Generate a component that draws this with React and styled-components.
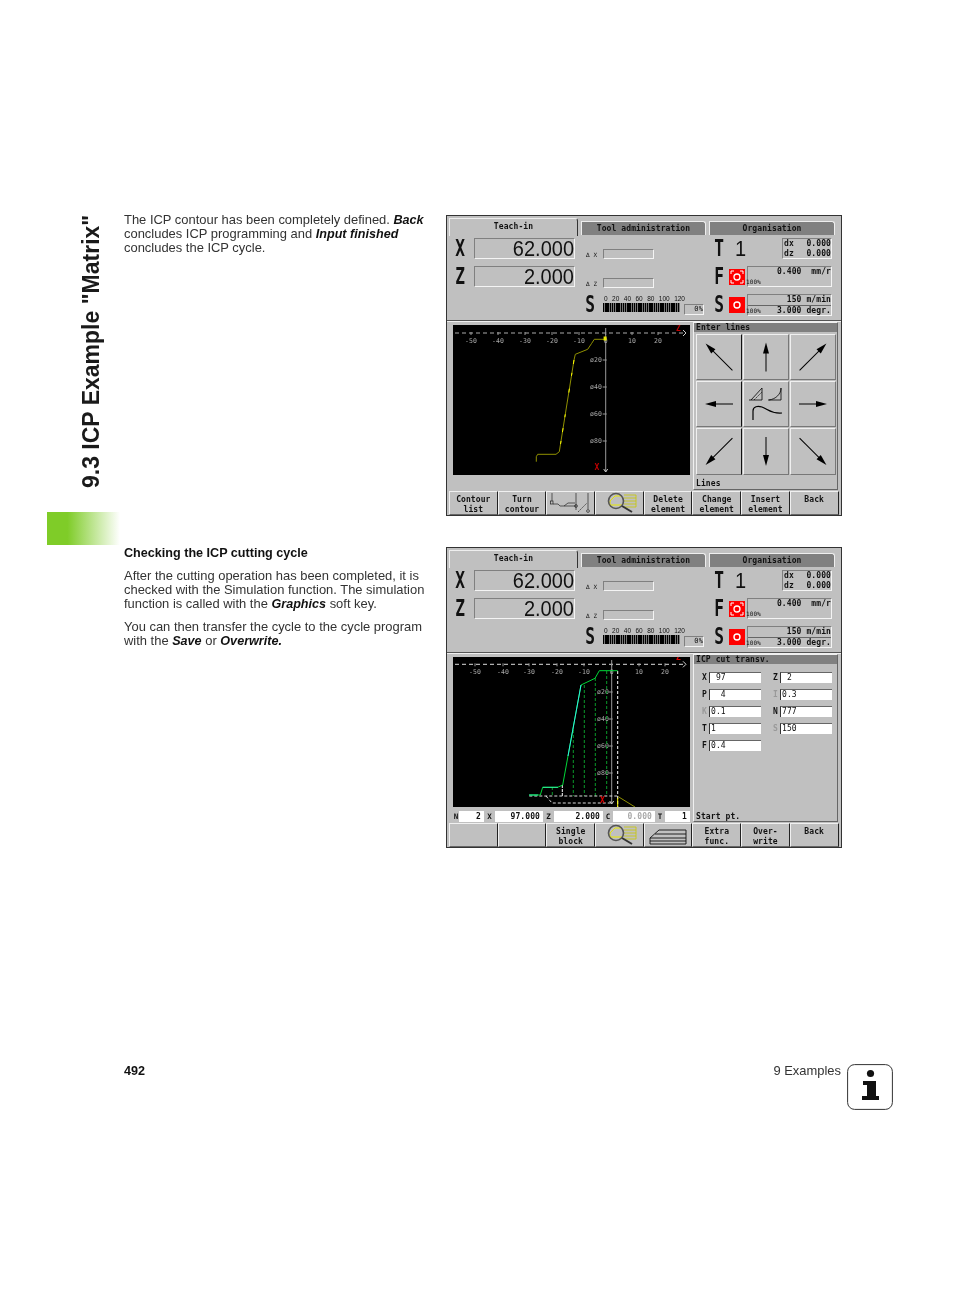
import styled, { createGlobalStyle } from "styled-components";

const GlobalStyle = createGlobalStyle`
  html, body {
    margin: 0;
    padding: 0;
    background: #fff;
  }
`;

const Page = styled.div`
  width: 954px;
  height: 1308px;
  box-sizing: border-box;
  padding: 215px 61px 0 47px;
  font-family: "Liberation Sans", Arial, sans-serif;
  color: #333;
  overflow: hidden;
  will-change: transform;
`;

const Section = styled.section`
  display: grid;
  grid-template-columns: 77px 322px 396px;
  height: 301px;
  margin-bottom: 31px;
`;

const Side = styled.div`
  display: flex;
  flex-direction: column;
`;

const ChapterTitle = styled.h1`
  margin: 0 0 0 32px;
  width: 24px;
  height: 273px;
  writing-mode: vertical-rl;
  transform: rotate(180deg);
  font-size: 23px;
  line-height: 24px;
  font-weight: 700;
  white-space: nowrap;
  color: #1a1a1a;
`;

const GreenTab = styled.div`
  margin-top: 24px;
  width: 73px;
  height: 33px;
  background: linear-gradient(90deg, #7fcc28 0, #7fcc28 28%, #ffffff 100%);
`;

const Copy = styled.div`
  margin-top: ${(p) => p.$top}px;
  font-size: 12.95px;
  line-height: 14px;
  > p {
    margin: 0 0 9px;
    width: 304px;
  }
  b {
    font-size: 12.6px;
    color: #111;
  }
  > h2 {
    margin: 0 0 9px;
    font-size: 12.6px;
    line-height: 14px;
    color: #111;
  }
`;

const Footer = styled.footer`
  margin-top: 216px;
  margin-left: 77px;
  display: flex;
  align-items: flex-start;
  font-size: 12.95px;
  line-height: 14px;
`;

const PageNumber = styled.b`
  color: #111;
  font-size: 12.6px;
  flex: 1;
`;

const ChapterName = styled.span`
  margin-right: 6px;
`;

const InfoBox = styled.svg`
  width: 46px;
  height: 46px;
  display: block;
`;

/* machine screen */

const Screen = styled.div`
  width: 396px;
  height: 301px;
  box-sizing: border-box;
  border: 1px solid #333;
  background: #c0c0c0;
  color: #111;
  font-family: "DejaVu Sans Mono", "Liberation Mono", monospace;
  font-size: 8px;
  letter-spacing: 0.1px;
  display: flex;
  flex-direction: column;
`;

const Top = styled.div`
  height: 105px;
  flex: none;
  box-sizing: border-box;
  border-bottom: 1px solid #555;
  box-shadow: 0 1px 0 #f0f0f0;
`;

const Tabs = styled.div`
  display: flex;
  gap: 3px;
  padding: 2px 0 0 2px;
  height: 18px;
  align-items: flex-end;
`;

const Tab = styled.div`
  width: ${(p) => p.$w}px;
  height: ${(p) => (p.$active ? 18 : 14)}px;
  box-sizing: border-box;
  margin-bottom: ${(p) => (p.$active ? 0 : 1)}px;
  background: ${(p) => (p.$active ? "#c0c0c0" : "#808080")};
  border-top: 1px solid #eee;
  border-left: 1px solid #eee;
  border-right: 1px solid ${(p) => (p.$active ? "#333" : "#eee")};
  border-radius: 0 3px 0 0;
  display: flex;
  justify-content: center;
  padding-top: ${(p) => (p.$active ? 3 : 2)}px;
  font-weight: 700;
`;

const Readouts = styled.div`
  margin: 2px 0 0 8px;
  display: grid;
  grid-template-columns: 120px 119px 118px;
  column-gap: 10px;
  grid-template-rows: 28px 28px 26px;
`;

const Cell = styled.div`
  display: flex;
  align-items: flex-start;
  min-width: 0;
`;

const AxisLetter = styled.span`
  width: ${(p) => p.$w || 19}px;
  flex: none;
  font-family: "DejaVu Sans Mono", monospace;
  font-weight: 700;
  font-size: 17px;
  line-height: 21px;
  letter-spacing: 0;
  transform: scale(0.95, 1.35);
  transform-origin: 4px 50%;
`;

const Value = styled.div`
  width: 101px;
  height: 21px;
  box-sizing: border-box;
  border: 1px solid;
  border-color: #808080 #f4f4f4 #f4f4f4 #808080;
  font-family: "Liberation Sans", Arial, sans-serif;
  font-size: 20px;
  line-height: 19px;
  letter-spacing: 0;
  text-align: right;
  color: #111;
  > span {
    display: inline-block;
    transform: scaleY(1.14);
  }
`;

const Delta = styled.div`
  margin-top: ${(p) => p.$top}px;
  display: flex;
  align-items: center;
  font-size: 6px;
  width: 18px;
  padding-left: 1px;
  box-sizing: border-box;
  height: 10px;
`;

const DeltaBox = styled.div`
  margin-top: ${(p) => p.$top}px;
  width: 51px;
  height: 10px;
  box-sizing: border-box;
  border: 1px solid;
  border-color: #808080 #f4f4f4 #f4f4f4 #808080;
`;

const Gauge = styled.div`
  width: 77px;
  flex: none;
`;

const GaugeLabels = styled.div`
  display: flex;
  justify-content: space-between;
  width: 81px;
  margin: 1px 0 0 1px;
  font-family: "Liberation Sans", Arial, sans-serif;
  font-size: 6.5px;
  line-height: 7px;
  height: 8px;
  letter-spacing: 0;
`;

const GaugeBars = styled.div`
  height: 9px;
  background: repeating-linear-gradient(90deg, #000 0 1.4px, #777 1.4px 2.2px);
`;

const Percent = styled.div`
  margin: 10px 0 0 4px;
  width: 21px;
  height: 11px;
  box-sizing: border-box;
  border: 1px solid;
  border-color: #808080 #f4f4f4 #f4f4f4 #808080;
  font-size: 7px;
  line-height: 9px;
  text-align: right;
`;

const BigDigit = styled.span`
  width: 47px;
  flex: none;
  font-family: "Liberation Sans", Arial, sans-serif;
  font-size: 20px;
  line-height: 21px;
  transform: scaleY(1.14);
`;

const OffsetBox = styled.div`
  width: 50px;
  height: 21px;
  flex: none;
  box-sizing: border-box;
  border: 1px solid;
  border-color: #808080 #f4f4f4 #f4f4f4 #808080;
  font-weight: 700;
  display: flex;
  flex-direction: column;
  > div {
    display: flex;
    justify-content: space-between;
    height: 10px;
    line-height: 10px;
    padding: 0 0 0 1px;
  }
`;

const RedIcon = styled.svg`
  width: 16px;
  height: 16px;
  flex: none;
  margin: ${(p) => p.$top}px 2px 0 -4px;
`;

const FeedBox = styled.div`
  width: 85px;
  height: ${(p) => p.$h}px;
  box-sizing: border-box;
  border: 1px solid;
  border-color: #808080 #f4f4f4 #f4f4f4 #808080;
  font-size: 8px;
  line-height: 9px;
  font-weight: 700;
  display: flex;
  flex-direction: column;
`;

const FeedLine = styled.div`
  text-align: right;
  height: 9px;
  margin-bottom: ${(p) => p.$gap || 0}px;
`;

const Rule = styled.div`
  height: 1px;
  background: #666;
`;

const FeedRow = styled.div`
  display: flex;
  justify-content: space-between;
  align-items: flex-end;
  height: 10px;
  > small {
    margin-left: -2px;
    font-size: 6px;
    font-weight: 400;
    line-height: 9px;
  }
`;

const Middle = styled.div`
  flex: none;
  height: 170px;
  display: flex;
  gap: 1px;
  padding: 1px 0 0 2px;
  box-sizing: border-box;
`;

const GraphPanel = styled.div`
  width: 243px;
  box-sizing: border-box;
  padding: 3px 2px 0 4px;
`;

const Plot = styled.svg`
  display: block;
  width: 237px;
  height: 150px;
  background: #000;
`;

const StatusRow = styled.div`
  display: flex;
  align-items: center;
  margin-top: 4px;
  height: 11px;
`;

const StatusLabel = styled.span`
  width: ${(p) => p.$w}px;
  flex: none;
  text-align: center;
  font-weight: 700;
  font-size: 7.5px;
`;

const StatusValue = styled.span`
  width: ${(p) => p.$w}px;
  flex: none;
  height: 11px;
  line-height: 11px;
  background: #fff;
  text-align: right;
  padding-right: 3px;
  box-sizing: border-box;
  font-weight: 700;
  color: ${(p) => (p.$dim ? "#aaa" : "#111")};
`;

const SidePanel = styled.div`
  width: 145px;
  box-sizing: border-box;
  border: 1px solid;
  border-color: #f0f0f0 #666 #666 #f0f0f0;
  display: flex;
  flex-direction: column;
  padding-bottom: ${(p) => p.$pad}px;
  height: 168px;
`;

const PanelTitle = styled.div`
  height: 9px;
  line-height: 9px;
  background: #808080;
  padding-left: 2px;
  font-weight: 700;
`;

const ArrowGrid = styled.div`
  margin: 2px 1px 0 2px;
  display: grid;
  grid-template-columns: repeat(3, 46px);
  grid-template-rows: 46px 46px 47px;
  gap: 1px;
`;

const ArrowKey = styled.div`
  box-sizing: border-box;
  border: 1px solid;
  border-color: #f0f0f0 ${(p) => (p.$edge ? "#111" : "#777")} #777 #f0f0f0;
`;

const KeySvg = styled.svg`
  display: block;
  width: 100%;
  height: 100%;
`;

const PanelNote = styled.div`
  margin-top: auto;
  padding-left: 2px;
  line-height: 9px;
  font-size: 8px;
  font-weight: 700;
`;

const Form = styled.div`
  margin: 8px 0 0 0;
  display: grid;
  grid-template-columns: 71px 68px;
  row-gap: 6px;
`;

const Field = styled.div`
  display: flex;
  height: 11px;
  align-items: center;
`;

const FieldLabel = styled.span`
  width: 15px;
  padding-right: 2px;
  box-sizing: border-box;
  text-align: right;
  flex: none;
  font-weight: 700;
  color: ${(p) => (p.$dim ? "#999" : "#111")};
`;

const FieldInput = styled.span`
  width: 52px;
  flex: none;
  height: 11px;
  line-height: 10px;
  background: #fff;
  box-sizing: border-box;
  border-top: 1px solid #666;
  border-left: 1px solid #333;
  padding-left: 1px;
  white-space: pre;
`;

const Softkeys = styled.div`
  flex: none;
  display: grid;
  grid-template-columns: repeat(8, 48.7px);
  height: 24px;
  padding-left: 2px;
`;

const Softkey = styled.div`
  box-sizing: border-box;
  height: 24px;
  border: 1px solid;
  border-color: #f0f0f0 #222 #666 #f0f0f0;
  display: flex;
  flex-direction: column;
  align-items: center;
  padding-top: 3px;
  line-height: 10px;
  font-weight: 700;
  text-align: center;
  overflow: hidden;
`;

const SoftkeyIcon = styled.svg`
  display: block;
  width: 47px;
  height: 22px;
  margin-top: -3px;
`;

const tickFont = { fontFamily: "DejaVu Sans Mono", fontSize: 6.5 };

function Axes({ zero, xTicks, labelX, hAxisY, color }) {
  return (
    <g {...tickFont}>
      <line x1="2" y1={hAxisY} x2="233" y2={hAxisY} stroke={color} strokeDasharray="4 3" />
      <path d={`M230 ${hAxisY - 3} L233 ${hAxisY} L230 ${hAxisY + 3}`} fill="none" stroke="#ccc" />
      <line x1={zero} y1="3" x2={zero} y2="147" stroke="#999" />
      <path d={`M${zero - 2} 144 L${zero} 147 L${zero + 2} 144`} fill="none" stroke="#ccc" />
      {xTicks.map(([label, x]) => (
        <g key={label}>
          <line x1={x} y1={hAxisY - 1} x2={x} y2={hAxisY + 2} stroke="#999" />
          <text x={x} y={hAxisY + 10} textAnchor="middle" fill="#aaa">
            {label}
          </text>
        </g>
      ))}
      {[
        ["ø20", 35],
        ["ø40", 62],
        ["ø60", 89],
        ["ø80", 116],
      ].map(([label, y]) => (
        <g key={label}>
          <line x1={zero - 3} y1={y} x2={zero + 1} y2={y} stroke="#999" />
          <text x={labelX} y={y + 2} fill="#aaa">
            {label}
          </text>
        </g>
      ))}
    </g>
  );
}

function ContourPlot() {
  return (
    <Plot viewBox="0 0 237 150">
      <Axes
        zero={152.7}
        labelX={137}
        hAxisY={8}
        color="#aaa"
        xTicks={[
          ["-50", 18],
          ["-40", 45],
          ["-30", 72],
          ["-20", 99],
          ["-10", 126],
          ["0", 152.7],
          ["10", 179],
          ["20", 205],
        ]}
      />
      <path
        d="M152.3 14.3H141.3L138.7 18.3L134.7 24.3L122.3 29.3L121 35L106.3 126.7L103 129.3H84.7L83.3 131.7V136.7"
        fill="none"
        stroke="#909000"
      />
      <path d="M121 35L106.3 126.7" fill="none" stroke="#ffff00" strokeDasharray="4 9 3 13 4 22 3 11" />
      <rect x="150.6" y="11.5" width="3" height="4" fill="#e8e800" />
      <g fontFamily="DejaVu Sans Mono" fontWeight="700" fill="#c00000">
        <text x="141.5" y="145" fontSize="8">X</text>
        <text x="223" y="6" fontSize="8">Z</text>
      </g>
    </Plot>
  );
}

function SimulationPlot() {
  return (
    <Plot viewBox="0 0 237 150">
      <Axes
        zero={158.7}
        labelX={144}
        hAxisY={7.3}
        color="#ddd"
        xTicks={[
          ["-50", 22],
          ["-40", 50],
          ["-30", 76],
          ["-20", 104],
          ["-10", 131],
          ["0", 158.7],
          ["10", 186],
          ["20", 212],
        ]}
      />
      <g stroke="#0a9a2a" strokeDasharray="3 2" fill="none">
        <path d="M153.7 14V139" />
        <path d="M142.3 21V139" />
        <path d="M131.3 28V139" />
        <path d="M120.3 73V139" />
        <path d="M99.3 130V139" />
      </g>
      <path d="M109.3 128V139" stroke="#fff" strokeDasharray="3 1" />
      <path d="M164.7 14V150" stroke="#fff" strokeDasharray="3 2" />
      <path d="M164.7 141V150" stroke="#ff0" />
      <path d="M76.3 139H164.7M93 139L99 146H158" fill="none" stroke="#ddd" strokeDasharray="3 2" />
      <path d="M165 139.5L182 150" stroke="#909000" />
      <path
        d="M164.7 13.7H146.3L142 21.3L128 28L109.7 128L104.7 130.3H89.7L87.3 138H76.3"
        fill="none"
        stroke="#00d838"
      />
      <path d="M128 28L115 99" stroke="#30f0e0" />
      <path d="M89.7 130.3H105M76 138H85" stroke="#30f0a0" />
      <g fontFamily="DejaVu Sans Mono" fontWeight="700" fill="#e00000">
        <text x="147" y="146" fontSize="8">X</text>
        <text x="223" y="3" fontSize="8">Z</text>
      </g>
    </Plot>
  );
}

function Arrow({ angle, length }) {
  const half = length / 2;
  return (
    <KeySvg viewBox="0 0 44 44">
      <g transform={`rotate(${angle} 22 22)`}>
        <line x1="22" y1={22 + half} x2="22" y2={22 - half + 4} stroke="#000" strokeWidth="1" />
        <polygon points={`22,${22 - half} 19,${22 - half + 11} 25,${22 - half + 11}`} fill="#000" />
      </g>
    </KeySvg>
  );
}

function LineTypes() {
  return (
    <KeySvg viewBox="0 0 44 44">
      <g fill="none" stroke="#000">
        <path d="M5 18H18V6L7 18" strokeWidth="0.8" />
        <path d="M10 18L18 10" strokeDasharray="2 1" strokeWidth="0.7" />
        <path d="M24 18H37V6C37 12 32 17 25 18" strokeWidth="0.8" />
        <path d="M9 38V29C9 24 14 24 18 25C24 27 27 32 38 31" strokeWidth="1.2" />
      </g>
    </KeySvg>
  );
}

function Magnifier() {
  return (
    <SoftkeyIcon viewBox="0 0 47 22">
      <g fill="none" stroke="#c8c800" strokeWidth="0.8">
        <path d="M28 3H40V15H27M28 6H40M28 9H40M28 12H40" />
        <path d="M14 14V9L19 4H25M14 13H26" strokeWidth="1" stroke="#e8e800" />
      </g>
      <circle cx="20" cy="9" r="7.5" fill="none" stroke="#555" strokeWidth="1.6" />
      <line x1="26" y1="14" x2="36" y2="20" stroke="#333" strokeWidth="2" />
    </SoftkeyIcon>
  );
}

function ContourIcon() {
  return (
    <SoftkeyIcon viewBox="0 0 47 22">
      <g fill="none" stroke="#222" strokeWidth="0.7">
        <path d="M5 1V9" />
        <rect x="3.5" y="9" width="2.5" height="3" />
        <path d="M6 12H11L13 14H17L21 11H28" />
        <path d="M17 14H29" />
        <path d="M29 1V18" />
        <circle cx="29" cy="14" r="1.4" />
        <path d="M31 20L40 11" strokeDasharray="2 1" />
        <path d="M41 1V17" />
        <circle cx="41" cy="19" r="1.4" />
      </g>
    </SoftkeyIcon>
  );
}

function RoughingIcon() {
  return (
    <SoftkeyIcon viewBox="0 0 47 22">
      <path
        d="M5 14L14 6H41V20H5ZM10 10H41M5 14H41M5 17H41"
        fill="none"
        stroke="#111"
        strokeWidth="0.9"
      />
    </SoftkeyIcon>
  );
}

function MachineStatus() {
  return (
    <Top>
      <Tabs>
        <Tab $active $w={129}>Teach-in</Tab>
        <Tab $w={125}>Tool administration</Tab>
        <Tab $w={126}>Organisation</Tab>
      </Tabs>
      <Readouts>
        <Cell>
          <AxisLetter>X</AxisLetter>
          <Value><span>62.000</span></Value>
        </Cell>
        <Cell>
          <Delta $top={11}>∆ X</Delta>
          <DeltaBox $top={11}></DeltaBox>
        </Cell>
        <Cell>
          <AxisLetter $w={21}>T</AxisLetter>
          <BigDigit>1</BigDigit>
          <OffsetBox>
            <div>dx<span>0.000</span></div>
            <div>dz<span>0.000</span></div>
          </OffsetBox>
        </Cell>
        <Cell>
          <AxisLetter>Z</AxisLetter>
          <Value><span>2.000</span></Value>
        </Cell>
        <Cell>
          <Delta $top={12}>∆ Z</Delta>
          <DeltaBox $top={12}></DeltaBox>
        </Cell>
        <Cell>
          <AxisLetter>F</AxisLetter>
          <RedIcon viewBox="0 0 16 16" $top={3}>
            <rect width="16" height="16" fill="#ff0000" />
            <circle cx="8" cy="8" r="3" fill="none" stroke="#fff" strokeWidth="1.3" />
            <path d="M2 5V2H5M11 2H14V5M14 11V14H11M5 14H2V11" fill="none" stroke="#fff" strokeWidth="1" />
          </RedIcon>
          <FeedBox $h={21}>
            <FeedLine $gap={1}>0.400&nbsp;&nbsp;mm/r</FeedLine>
            <Rule />
            <FeedRow><small>100%</small></FeedRow>
          </FeedBox>
        </Cell>
        <Cell />
        <Cell>
          <AxisLetter $w={18}>S</AxisLetter>
          <Gauge>
            <GaugeLabels>
              <span>0</span><span>20</span><span>40</span><span>60</span><span>80</span><span>100</span><span>120</span>
            </GaugeLabels>
            <GaugeBars />
          </Gauge>
          <Percent>0%</Percent>
        </Cell>
        <Cell>
          <AxisLetter>S</AxisLetter>
          <RedIcon viewBox="0 0 16 16" $top={3}>
            <rect width="16" height="16" fill="#ff0000" />
            <circle cx="8" cy="8" r="3" fill="none" stroke="#fff" strokeWidth="1.4" />
          </RedIcon>
          <FeedBox $h={22}>
            <FeedLine $gap={1}>150&nbsp;m/min</FeedLine>
            <Rule />
            <FeedRow><small>100%</small><span>3.000&nbsp;degr.</span></FeedRow>
          </FeedBox>
        </Cell>
      </Readouts>
    </Top>
  );
}

function Key({ lines, children }) {
  return (
    <Softkey>
      {lines && lines.map((line) => <span key={line}>{line}</span>)}
      {children}
    </Softkey>
  );
}

const arrows = [
  [-45, 38], [0, 29], [45, 38],
  [-90, 28], null, [90, 28],
  [-135, 38], [180, 29], [135, 38],
];

function ContourScreen() {
  return (
    <Screen>
      <MachineStatus />
      <Middle>
        <GraphPanel>
          <ContourPlot />
        </GraphPanel>
        <SidePanel $pad={1}>
          <PanelTitle>Enter lines</PanelTitle>
          <ArrowGrid>
            {arrows.map((a, i) => (
              <ArrowKey key={i} $edge={i % 3 === 0}>
                {a ? <Arrow angle={a[0]} length={a[1]} /> : <LineTypes />}
              </ArrowKey>
            ))}
          </ArrowGrid>
          <PanelNote>Lines</PanelNote>
        </SidePanel>
      </Middle>
      <Softkeys>
        <Key lines={["Contour", "list"]} />
        <Key lines={["Turn", "contour"]} />
        <Key><ContourIcon /></Key>
        <Key><Magnifier /></Key>
        <Key lines={["Delete", "element"]} />
        <Key lines={["Change", "element"]} />
        <Key lines={["Insert", "element"]} />
        <Key lines={["Back"]} />
      </Softkeys>
    </Screen>
  );
}

const fields = [
  ["X", " 97"], ["Z", " 2"],
  ["P", "  4"], ["I", "0.3", true],
  ["K", "0.1", true], ["N", "777"],
  ["T", "1"], ["S", "150", true],
  ["F", "0.4"],
];

function SimulationScreen() {
  return (
    <Screen>
      <MachineStatus />
      <Middle>
        <GraphPanel>
          <SimulationPlot />
          <StatusRow>
            <StatusLabel $w={6}>N</StatusLabel>
            <StatusValue $w={25}>2</StatusValue>
            <StatusLabel $w={11}>X</StatusLabel>
            <StatusValue $w={48}>97.000</StatusValue>
            <StatusLabel $w={11}>Z</StatusLabel>
            <StatusValue $w={49}>2.000</StatusValue>
            <StatusLabel $w={10}>C</StatusLabel>
            <StatusValue $w={42} $dim>0.000</StatusValue>
            <StatusLabel $w={10}>T</StatusLabel>
            <StatusValue $w={25}>1</StatusValue>
          </StatusRow>
        </GraphPanel>
        <SidePanel $pad={0}>
          <PanelTitle>ICP cut transv.</PanelTitle>
          <Form>
            {fields.map(([label, value, dim]) => (
              <Field key={label}>
                <FieldLabel $dim={dim}>{label}</FieldLabel>
                <FieldInput>{value}</FieldInput>
              </Field>
            ))}
          </Form>
          <PanelNote>Start pt.</PanelNote>
        </SidePanel>
      </Middle>
      <Softkeys>
        <Key />
        <Key />
        <Key lines={["Single", "block"]} />
        <Key><Magnifier /></Key>
        <Key><RoughingIcon /></Key>
        <Key lines={["Extra", "func."]} />
        <Key lines={["Over-", "write"]} />
        <Key lines={["Back"]} />
      </Softkeys>
    </Screen>
  );
}

export default function App() {
  return (
    <Page>
      <GlobalStyle />
      <Section>
        <Side>
          <ChapterTitle>9.3 ICP Example "Matrix"</ChapterTitle>
          <GreenTab />
        </Side>
        <Copy $top={-2}>
          <p>
            The ICP contour has been completely defined. <b><i>Back</i></b>{" "}
            concludes ICP programming and <b><i>Input finished</i></b> concludes
            the ICP cycle.
          </p>
        </Copy>
        <ContourScreen />
      </Section>
      <Section>
        <Side />
        <Copy $top={-1}>
          <h2>Checking the ICP cutting cycle</h2>
          <p>
            After the cutting operation has been completed, it is checked with
            the Simulation function. The simulation function is called with the{" "}
            <b><i>Graphics</i></b> soft key.
          </p>
          <p>
            You can then transfer the cycle to the cycle program with the{" "}
            <b><i>Save</i></b> or <b><i>Overwrite.</i></b>
          </p>
        </Copy>
        <SimulationScreen />
      </Section>
      <Footer>
        <PageNumber>492</PageNumber>
        <ChapterName>9 Examples</ChapterName>
        <InfoBox viewBox="0 0 46 46">
          <rect x="0.6" y="0.6" width="44.8" height="44.8" rx="7" fill="#fff" stroke="#333" strokeWidth="1" />
          <circle cx="23.5" cy="9.5" r="3.6" fill="#111" />
          <path d="M16 17H29V32H32V36H15V32H20V21H16Z" fill="#111" />
        </InfoBox>
      </Footer>
    </Page>
  );
}
